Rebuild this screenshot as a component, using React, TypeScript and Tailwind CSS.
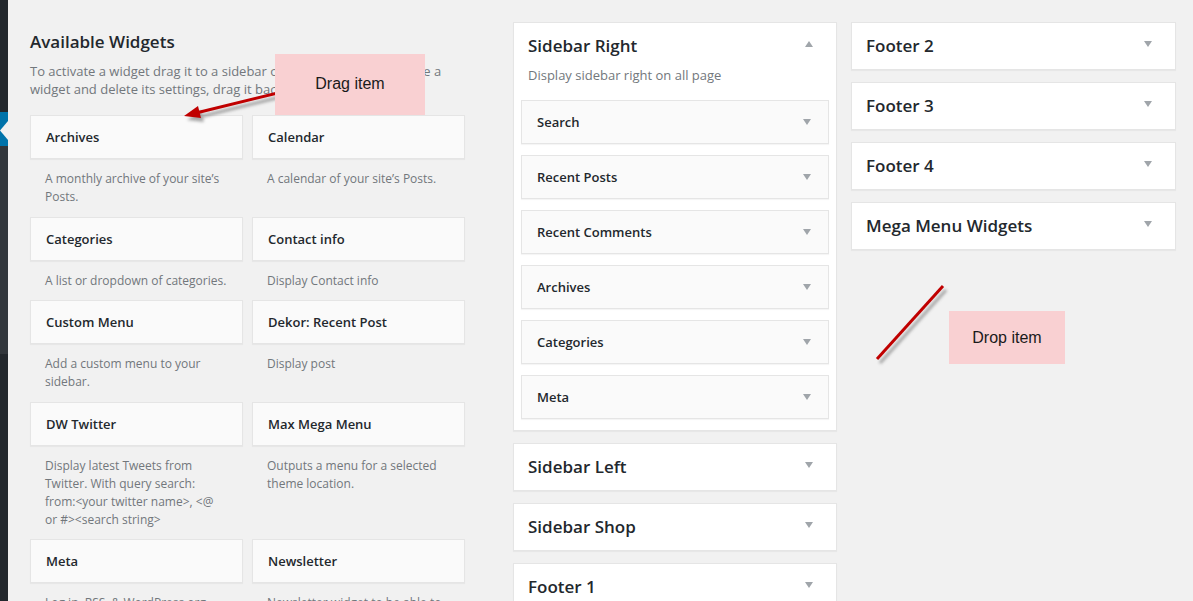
import React from "react";

const available = [
  { name: "Archives", desc: "A monthly archive of your site’s Posts." },
  { name: "Calendar", desc: "A calendar of your site’s Posts." },
  { name: "Categories", desc: "A list or dropdown of categories." },
  { name: "Contact info", desc: "Display Contact info" },
  { name: "Custom Menu", desc: "Add a custom menu to your sidebar." },
  { name: "Dekor: Recent Post", desc: "Display post" },
  {
    name: "DW Twitter",
    desc: "Display latest Tweets from Twitter. With query search: from:<your twitter name>, <@ or #><search string>",
  },
  { name: "Max Mega Menu", desc: "Outputs a menu for a selected theme location." },
  { name: "Meta", desc: "Log in, RSS, & WordPress.org links." },
  { name: "Newsletter", desc: "Newsletter widget to be able to subscribe" },
];

const sidebarRight = ["Search", "Recent Posts", "Recent Comments", "Archives", "Categories", "Meta"];

function Caret({ up = false }: { up?: boolean }) {
  return (
    <svg width="8" height="6" viewBox="0 0 8 6" className="shrink-0">
      {up ? <polygon points="0,6 8,6 4,0" fill="#a0a5aa" /> : <polygon points="0,0 8,0 4,6" fill="#a0a5aa" />}
    </svg>
  );
}

function WidgetCard({ name, small = false }: { name: string; small?: boolean }) {
  return (
    <div className="h-[44px] shrink-0 flex items-center justify-between bg-[#fafafa] border border-[#e5e5e5] shadow-[0_1px_1px_rgba(0,0,0,0.04)] pl-[15px] pr-[17px]">
      <span className="text-[13px] leading-[18px] font-semibold text-[#23282d]">{name}</span>
      {small && <Caret />}
    </div>
  );
}

function SidebarPanel({ title }: { title: string }) {
  return (
    <div className="h-[48px] shrink-0 flex items-center justify-between bg-white border border-[#e5e5e5] shadow-[0_1px_1px_rgba(0,0,0,0.04)] pl-[14px] pr-[23px]">
      <span className="text-[17px] leading-[24px] font-semibold text-[#23282d]">{title}</span>
      <div className="mb-[5px]">
        <Caret />
      </div>
    </div>
  );
}

export default function App() {
  return (
    <div
      className="relative w-[1193px] h-[601px] overflow-hidden bg-[#f1f1f1] flex"
      style={{ fontFamily: '"Open Sans", "Noto Sans", sans-serif' }}
    >
      {/* admin menu edge */}
      <div className="w-[8px] shrink-0 flex flex-col">
        <div className="h-[112px] bg-[#23282d]" />
        <div className="h-[34px] bg-[#0073aa] relative">
          <svg width="8" height="34" viewBox="0 0 8 34" className="absolute left-0 top-0">
            <polygon points="8,9 8,28 0,18.5" fill="#f1f1f1" />
          </svg>
        </div>
        <div className="h-[208px] bg-[#32373c]" />
        <div className="flex-1 bg-[#23282d]" />
      </div>

      {/* available widgets */}
      <div className="ml-[22px] w-[435px] shrink-0 pt-[30px]">
        <h2 className="text-[17px] leading-[24px] font-semibold text-[#23282d]">Available Widgets</h2>
        <p className="mt-[8px] text-[13px] leading-[18px] text-[#72777c]">
          To activate a widget drag it to a sidebar or click on it. To deactivate a widget and delete its
          settings, drag it back.
        </p>
        <div className="mt-[17px] grid grid-cols-2 gap-x-[9px]">
          {available.map((w) => (
            <div key={w.name}>
              <WidgetCard name={w.name} />
              <p className="pt-[11px] pb-[10.5px] px-[15px] text-[12px] leading-[18px] text-[#72777c]">{w.desc}</p>
            </div>
          ))}
        </div>
      </div>

      {/* sidebars column 1 */}
      <div className="ml-[48px] w-[324px] shrink-0 pt-[22px] flex flex-col gap-[12px]">
        <div className="shrink-0 bg-white border border-[#e5e5e5] shadow-[0_1px_1px_rgba(0,0,0,0.04)] pb-[11px]">
          <div className="flex items-start justify-between pl-[14px] pr-[23px] pt-[11px]">
            <span className="text-[17px] leading-[24px] font-semibold text-[#23282d]">Sidebar Right</span>
            <div className="mt-[7px]">
              <Caret up />
            </div>
          </div>
          <p className="mt-[8px] pl-[14px] text-[13px] leading-[18px] text-[#72777c]">Display sidebar right on all page</p>
          <div className="mt-[16px] mx-[7px] flex flex-col gap-[11px]">
            {sidebarRight.map((n) => (
              <WidgetCard key={n} name={n} small />
            ))}
          </div>
        </div>
        <SidebarPanel title="Sidebar Left" />
        <SidebarPanel title="Sidebar Shop" />
        <SidebarPanel title="Footer 1" />
      </div>

      {/* sidebars column 2 */}
      <div className="ml-[14px] w-[325px] shrink-0 pt-[22px] flex flex-col gap-[12px]">
        <SidebarPanel title="Footer 2" />
        <SidebarPanel title="Footer 3" />
        <SidebarPanel title="Footer 4" />
        <SidebarPanel title="Mega Menu Widgets" />
      </div>

      {/* annotations */}
      <svg className="absolute left-0 top-0 pointer-events-none" width="1193" height="601">
        <defs>
          <filter id="sh" x="-20%" y="-20%" width="140%" height="140%">
            <feGaussianBlur stdDeviation="1.5" />
          </filter>
        </defs>
        <g filter="url(#sh)" opacity="0.5" transform="translate(3,4)">
          <line x1="290" y1="90" x2="196" y2="113" stroke="#555" strokeWidth="3" />
          <polygon points="184,116 198,106 201,118" fill="#555" />
          <line x1="877" y1="359" x2="943" y2="286" stroke="#555" strokeWidth="3" />
        </g>
        <line x1="290" y1="90" x2="196" y2="113" stroke="#c00000" strokeWidth="3" />
        <polygon points="184,116 198,106 201,118" fill="#c00000" />
        <line x1="877" y1="359" x2="943" y2="286" stroke="#c00000" strokeWidth="3" />
      </svg>
      <div
        className="absolute left-[275px] top-[54px] w-[150px] h-[61px] bg-[#f9d0d2] flex items-center justify-center pb-[2px] text-[16px] text-[#1a1a1a]"
        style={{ fontFamily: '"Liberation Sans", Arial, sans-serif' }}
      >
        Drag item
      </div>
      <div
        className="absolute left-[949px] top-[311px] w-[116px] h-[53px] bg-[#f9d0d2] flex items-center justify-center text-[16px] text-[#1a1a1a]"
        style={{ fontFamily: '"Liberation Sans", Arial, sans-serif' }}
      >
        Drop item
      </div>
    </div>
  );
}
